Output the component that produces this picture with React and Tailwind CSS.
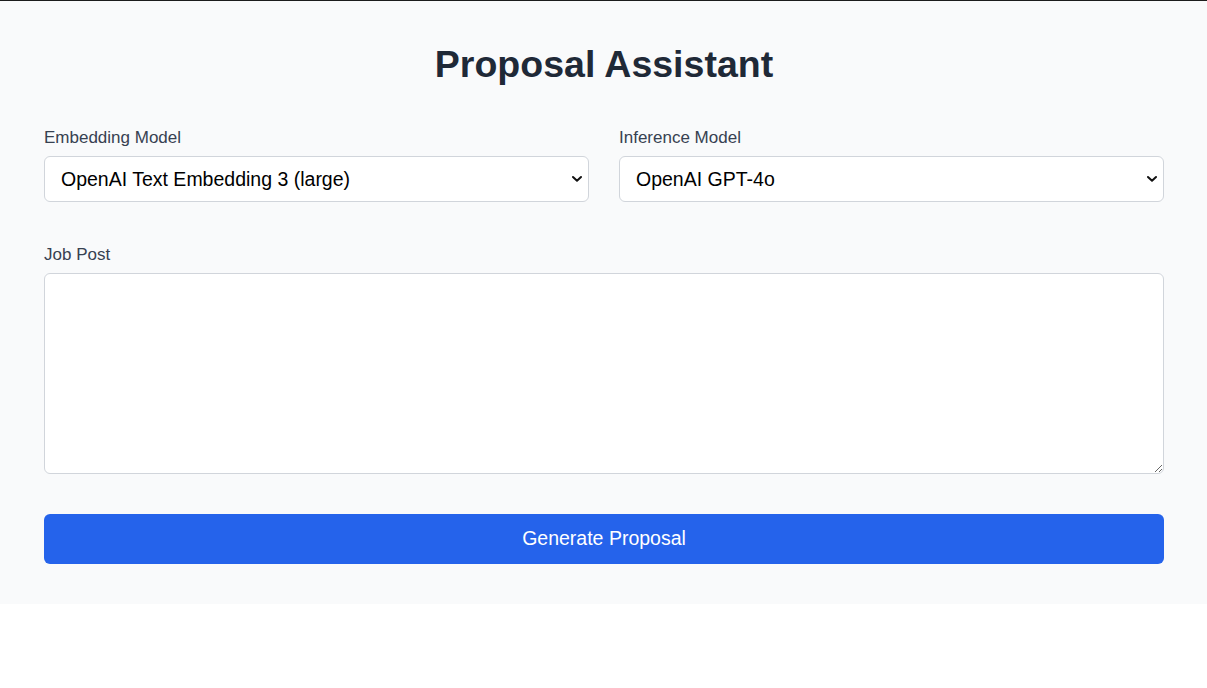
import React, { useState } from 'react';

const Chevron = () => (
    <svg
        className="pointer-events-none absolute right-[7px] top-1/2 -translate-y-1/2"
        width="10"
        height="7"
        viewBox="0 0 10 7"
        fill="none"
    >
        <path d="M1 1.5L5 5.2L9 1.5" stroke="#111" strokeWidth="2" strokeLinecap="round" strokeLinejoin="round" />
    </svg>
);

const ModelSelect = ({ label, value, onChange, options }) => (
    <div>
        <label className="block text-[17px] leading-6 text-[#374151] mb-[6px]">{label}</label>
        <div className="relative">
            <select
                value={value}
                onChange={e => onChange(e.target.value)}
                className="w-full h-[46px] appearance-none bg-white border border-[#d1d5db] rounded-md pl-4 pr-8 pt-[2px] text-[19.5px] text-black outline-none"
            >
                {options.map(opt => (
                    <option key={opt} value={opt}>{opt}</option>
                ))}
            </select>
            <Chevron />
        </div>
    </div>
);

const App = () => {
    const [embedding, setEmbedding] = useState('OpenAI Text Embedding 3 (large)');
    const [inference, setInference] = useState('OpenAI GPT-4o');
    const [jobPost, setJobPost] = useState('');

    return (
        <div className="min-h-[688px] bg-white font-['Liberation_Sans',Arial,sans-serif]">
            <div className="bg-[#f9fafb] border-t border-[#1c1c1c] pt-[43px] pb-10 pl-[44px] pr-[43px]">
                <h1 className="text-center text-[37.5px] leading-10 font-bold text-[#1f2937] mb-[42px]">
                    Proposal Assistant
                </h1>

                {/* Model pickers */}
                <div className="grid grid-cols-2 gap-[30px]">
                    <ModelSelect
                        label="Embedding Model"
                        value={embedding}
                        onChange={setEmbedding}
                        options={['OpenAI Text Embedding 3 (large)', 'OpenAI Text Embedding 3 (small)', 'OpenAI Ada 002']}
                    />
                    <ModelSelect
                        label="Inference Model"
                        value={inference}
                        onChange={setInference}
                        options={['OpenAI GPT-4o', 'OpenAI GPT-4o mini', 'OpenAI GPT-4 Turbo']}
                    />
                </div>

                <div className="mt-[41px]">
                    <label className="block text-[17px] leading-6 text-[#374151] mb-[6px]">Job Post</label>
                    <textarea
                        value={jobPost}
                        onChange={e => setJobPost(e.target.value)}
                        className="block w-full h-[201px] bg-white border border-[#d1d5db] rounded-md px-4 py-3 text-base outline-none"
                    />
                </div>

                <button className="mt-10 w-full h-[50px] bg-[#2563eb] hover:bg-[#1d4ed8] text-white text-[19.5px] rounded-md">
                    Generate Proposal
                </button>
            </div>
        </div>
    );
};

export default App;
